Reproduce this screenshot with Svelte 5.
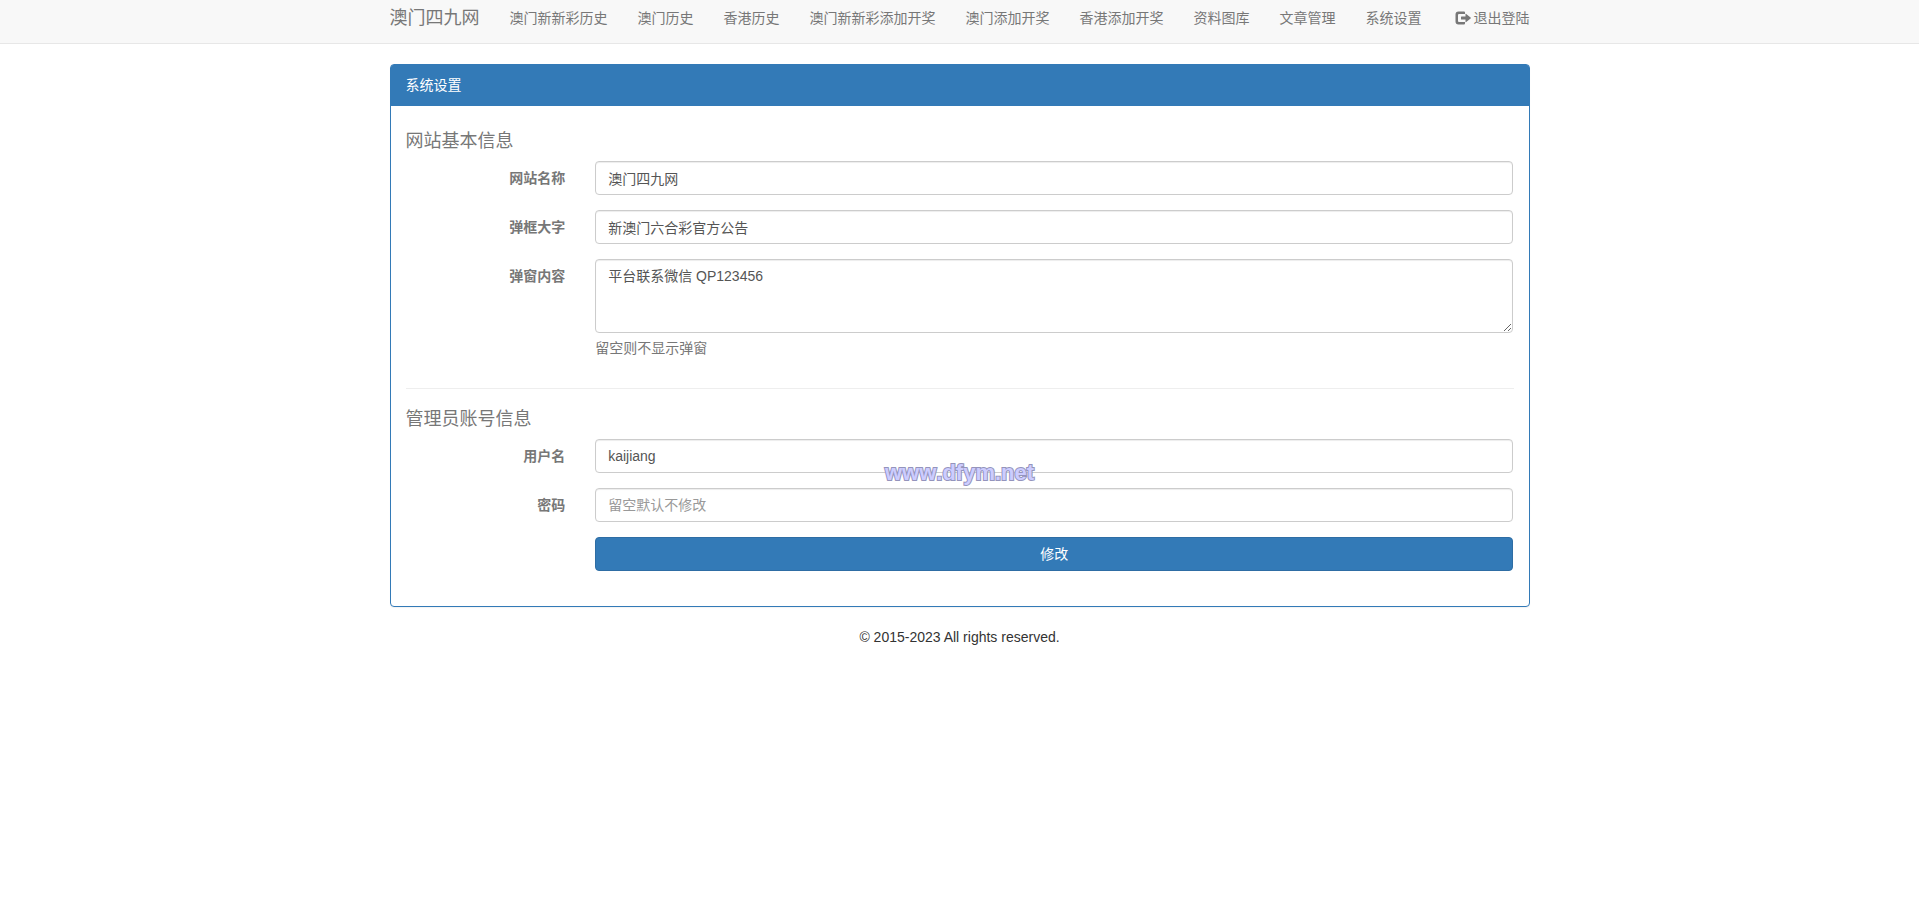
<script lang="ts">
	const links = [
		'澳门新新彩历史',
		'澳门历史',
		'香港历史',
		'澳门新新彩添加开奖',
		'澳门添加开奖',
		'香港添加开奖',
		'资料图库',
		'文章管理',
		'系统设置',
	];

	let siteName = $state('澳门四九网');
	let popupTitle = $state('新澳门六合彩官方公告');
	let popupContent = $state('平台联系微信 QP123456');
	let username = $state('kaijiang');
	let password = $state('');
</script>

<nav class="navbar">
	<div class="container nav-inner">
		<a class="brand" href="#/">澳门四九网</a>
		<ul class="nav-list">
			{#each links as link}
				<li><a href="#/">{link}</a></li>
			{/each}
		</ul>
		<a class="logout" href="#/">
			<svg class="icon" viewBox="0 0 16 14" aria-hidden="true">
				<path d="M9 .5H3.500a3 3 0 0 0-3 3v7a3 3 0 0 0 3 3H9a1 1 0 0 0 1-1V11H4a1 1 0 0 1-1-1V4a1 1 0 0 1 1-1h6V1.500a1 1 0 0 0-1-1Z" />
				<path d="M10.500 3.200a.4.4 0 0 1 .7-.3l4.400 3.700a.5.5 0 0 1 0 .8l-4.400 3.700a.4.4 0 0 1-.7-.3V8.500h-4A.5.5 0 0 1 6 8V6a.5.5 0 0 1 .5-.5h4Z" />
			</svg>
			退出登陆
		</a>
	</div>
</nav>

<main class="container">
	<section class="panel">
		<div class="panel-heading">系统设置</div>
		<form class="panel-body" onsubmit={(e) => e.preventDefault()}>
			<h4>网站基本信息</h4>
			<div class="form-group">
				<label for="site-name">网站名称</label>
				<div class="field">
					<input id="site-name" class="form-control" type="text" bind:value={siteName} />
				</div>
			</div>
			<div class="form-group">
				<label for="popup-title">弹框大字</label>
				<div class="field">
					<input id="popup-title" class="form-control" type="text" bind:value={popupTitle} />
				</div>
			</div>
			<div class="form-group">
				<label for="popup-content">弹窗内容</label>
				<div class="field">
					<textarea id="popup-content" class="form-control" rows="3" bind:value={popupContent}></textarea>
					<p class="help">留空则不显示弹窗</p>
				</div>
			</div>

			<hr />

			<h4>管理员账号信息</h4>
			<div class="form-group">
				<label for="username">用户名</label>
				<div class="field">
					<input id="username" class="form-control" type="text" bind:value={username} />
				</div>
			</div>
			<div class="form-group">
				<label for="password">密码</label>
				<div class="field">
					<input id="password" class="form-control" type="password" placeholder="留空默认不修改" bind:value={password} />
				</div>
			</div>
			<div class="form-group">
				<div class="field offset">
					<button class="btn" type="submit">修改</button>
				</div>
			</div>
		</form>
	</section>
	<footer>© 2015-2023 All rights reserved.</footer>
</main>

<div class="watermark">www.dfym.net</div>

<style>
	:global(body) {
		margin: 0;
		background: #fff;
		color: #333;
		font-family: "Liberation Sans", Arial, "Noto Sans CJK SC", sans-serif;
		font-size: 14px;
		line-height: 20px;
	}

	* {
		box-sizing: border-box;
	}

	.container {
		max-width: 1170px;
		margin: 0 auto;
		padding: 0 15px;
	}

	.navbar {
		background: #f8f8f8;
		border-bottom: 1px solid #e7e7e7;
		padding: 8px 0 15px;
		margin-bottom: 20px;
	}

	.navbar a {
		color: #777;
		text-decoration: none;
		white-space: nowrap;
	}

	.navbar a:hover {
		color: #333;
	}

	.nav-inner {
		display: flex;
		align-items: center;
	}

	.brand {
		font-size: 18px;
		margin-right: 30px;
	}

	.nav-list {
		display: flex;
		gap: 30px;
		margin: 0;
		padding: 0;
		list-style: none;
	}

	.logout {
		display: flex;
		align-items: center;
		gap: 3px;
		margin-left: auto;
	}

	.icon {
		width: 16px;
		height: 14px;
		fill: currentColor;
	}

	.panel {
		border: 1px solid #337ab7;
		border-radius: 4px;
		margin-bottom: 20px;
		box-shadow: 0 1px 1px rgba(0, 0, 0, 0.05);
	}

	.panel-heading {
		padding: 10px 15px;
		background: #337ab7;
		border-bottom: 1px solid #337ab7;
		border-radius: 2px 2px 0 0;
		color: #fff;
	}

	.panel-body {
		padding: 25px 15px 20px;
		color: #777;
	}

	h4 {
		margin: 0 0 10px;
		font-size: 18px;
		font-weight: 400;
		line-height: 20px;
	}

	.form-group {
		display: flex;
		margin: 0 -15px 15px;
	}

	label {
		width: calc(100% / 6);
		padding: 7px 15px 0;
		font-weight: 700;
		text-align: right;
	}

	.field {
		width: calc(100% * 5 / 6);
		padding: 0 15px;
	}

	.offset {
		margin-left: calc(100% / 6);
	}

	.form-control {
		display: block;
		width: 100%;
		height: 34px;
		margin: 0;
		padding: 6px 12px;
		border: 1px solid #ccc;
		border-radius: 4px;
		background: #fff;
		box-shadow: inset 0 1px 1px rgba(0, 0, 0, 0.075);
		color: #555;
		font: inherit;
	}

	textarea.form-control {
		height: auto;
		resize: vertical;
	}

	.form-control::placeholder {
		color: #999;
		opacity: 1;
	}

	.form-control:focus {
		border-color: #66afe9;
		outline: 0;
	}

	.help {
		margin: 5px 0 10px;
	}

	hr {
		margin: 20px 0;
		border: 0;
		border-top: 1px solid #eee;
	}

	.btn {
		display: block;
		width: 100%;
		padding: 6px 12px;
		border: 1px solid #2e6da4;
		border-radius: 4px;
		background: #337ab7;
		color: #fff;
		font: inherit;
		cursor: pointer;
	}

	.btn:hover {
		background: #286090;
	}

	footer {
		text-align: center;
	}

	.watermark {
		position: absolute;
		top: 463px;
		left: 0;
		right: 0;
		color: #ccccff;
		font-size: 22px;
		font-weight: 700;
		font-kerning: none;
		text-align: center;
		-webkit-text-stroke: 2px #9494bc;
		paint-order: stroke fill;
		pointer-events: none;
	}
</style>
